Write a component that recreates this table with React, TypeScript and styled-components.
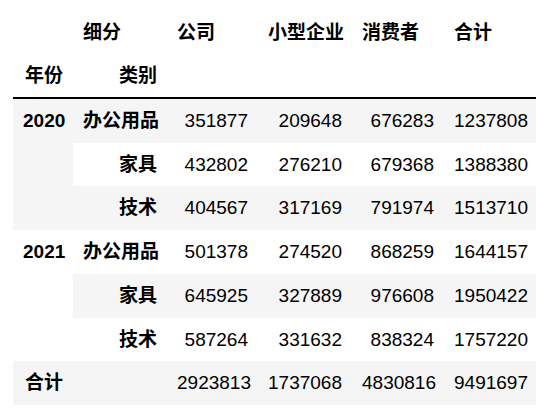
import { styled, createGlobalStyle } from 'styled-components';

const GlobalStyle = createGlobalStyle`
  body {
    margin: 0;
    background: #fff;
    font-family: "Liberation Sans", "Noto Sans CJK SC", sans-serif;
  }
`;

const Wrapper = styled.div`
  padding: 11px 0 0 13px;
`;

const Table = styled.table`
  border-collapse: collapse;
  border-spacing: 0;
  table-layout: fixed;
  width: 523px;
  font-size: 19px;
  color: #000;
`;

const Col = styled.col<{ $w: number }>`
  width: ${(p) => p.$w}px;
`;

const Head = styled.thead`
  border-bottom: 2px solid #000;
`;

const HeadRow = styled.tr``;

const HeadCell = styled.th<{ $align: 'left' | 'right' }>`
  padding: 10px;
  line-height: 23px;
  font-weight: bold;
  text-align: ${(p) => p.$align};
  vertical-align: middle;
  white-space: nowrap;
`;

const Body = styled.tbody`
  tr:nth-child(odd) {
    background: #f5f5f5;
  }
`;

const Row = styled.tr``;

const IndexCell = styled.th`
  padding: 10px;
  line-height: 23.7px;
  font-weight: bold;
  text-align: right;
  vertical-align: top;
  white-space: nowrap;
`;

const Cell = styled.td`
  padding: 10px;
  line-height: 23.7px;
  text-align: right;
  vertical-align: middle;
  white-space: nowrap;
`;

const columns = ['公司', '小型企业', '消费者', '合计'];
const widths = [60, 94, 91, 94, 92, 92];

type BodyRow = { year?: string; span?: number; cat: string; values: number[] };

const rows: BodyRow[] = [
  { year: '2020', span: 3, cat: '办公用品', values: [351877, 209648, 676283, 1237808] },
  { cat: '家具', values: [432802, 276210, 679368, 1388380] },
  { cat: '技术', values: [404567, 317169, 791974, 1513710] },
  { year: '2021', span: 3, cat: '办公用品', values: [501378, 274520, 868259, 1644157] },
  { cat: '家具', values: [645925, 327889, 976608, 1950422] },
  { cat: '技术', values: [587264, 331632, 838324, 1757220] },
  { year: '合计', span: 1, cat: '', values: [2923813, 1737068, 4830816, 9491697] },
];

const App = () => {
  return (
    <Wrapper>
      <GlobalStyle />
      <Table>
        <colgroup>
          {widths.map((w, i) => (
            <Col key={i} $w={w} />
          ))}
        </colgroup>
        <Head>
          <HeadRow>
            <HeadCell $align="left"></HeadCell>
            <HeadCell $align="left">细分</HeadCell>
            {columns.map((c) => (
              <HeadCell key={c} $align="left">
                {c}
              </HeadCell>
            ))}
          </HeadRow>
          <HeadRow>
            <HeadCell $align="right">年份</HeadCell>
            <HeadCell $align="right">类别</HeadCell>
            {columns.map((c) => (
              <HeadCell key={c} $align="right"></HeadCell>
            ))}
          </HeadRow>
        </Head>
        <Body>
          {rows.map((r, i) => (
            <Row key={i}>
              {r.year && <IndexCell rowSpan={r.span}>{r.year}</IndexCell>}
              <IndexCell>{r.cat}</IndexCell>
              {r.values.map((v, j) => (
                <Cell key={j}>{v}</Cell>
              ))}
            </Row>
          ))}
        </Body>
      </Table>
    </Wrapper>
  );
};

export default App;
